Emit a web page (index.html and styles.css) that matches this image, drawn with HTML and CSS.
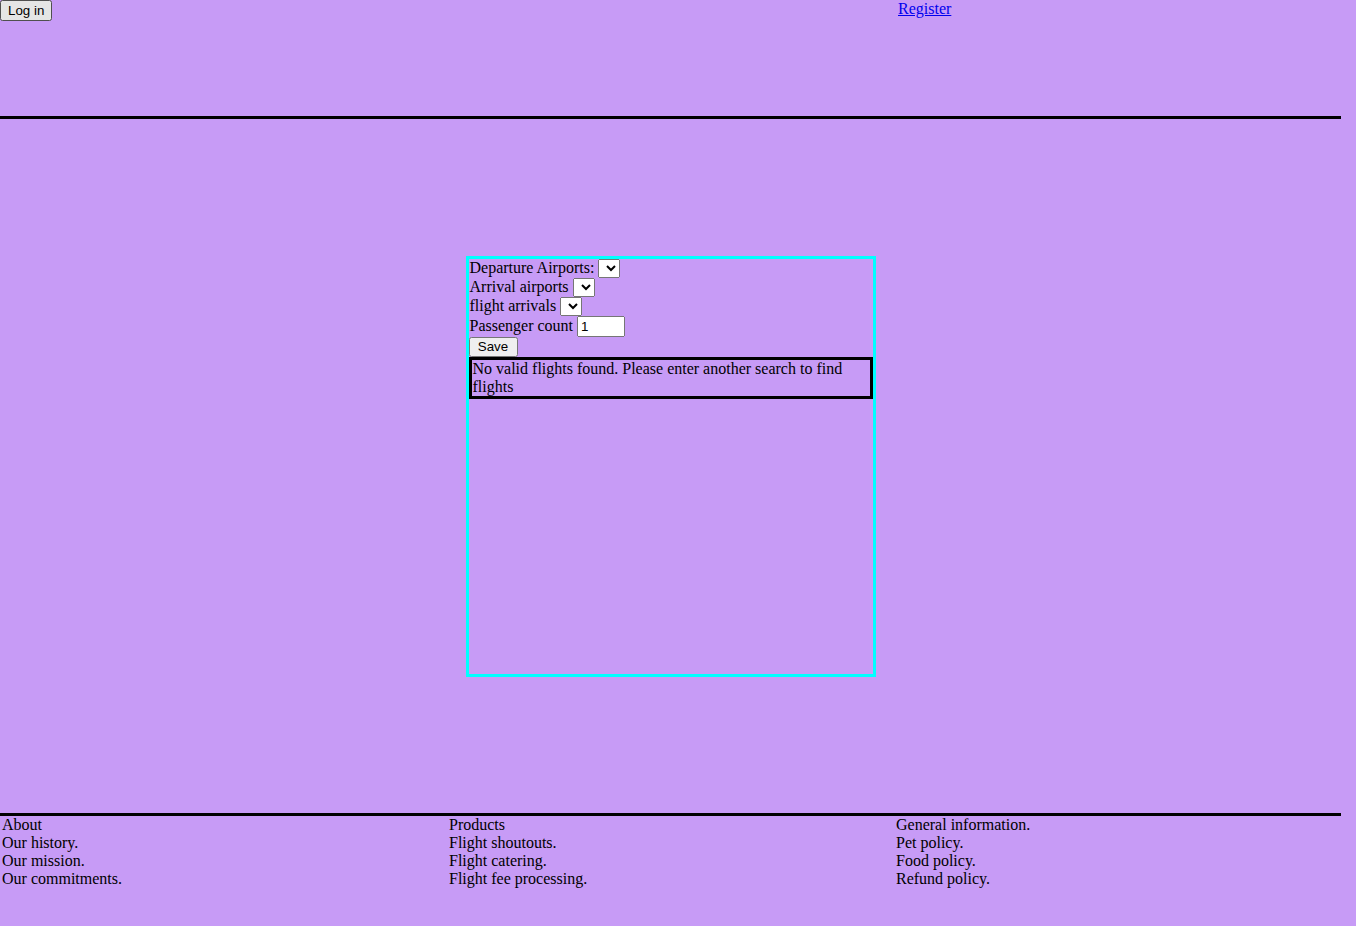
FILE: index.html
```html
<!DOCTYPE html>
<html>
<head>
<meta charset="utf-8">
<title>Flights</title>
<link rel="stylesheet" href="styles.css">
</head>
<body>
<header class="top">
  <div class="top-col"><button class="login">Log in</button></div>
  <div class="top-col"></div>
  <div class="top-col"><a href="#" class="register">Register</a></div>
</header>
<main class="main">
  <div class="search">
    <div class="row label-row">Departure Airports: <select class="sel"></select></div>
    <div class="row label-row">Arrival airports <select class="sel"></select></div>
    <div class="row label-row">flight arrivals <select class="sel"></select></div>
    <div class="row label-row">Passenger count <input class="count" type="text" value="1"></div>
    <div class="row"><button class="save">Save</button></div>
    <div class="msg">No valid flights found. Please enter another search to find flights</div>
  </div>
</main>
<footer class="foot">
  <div class="foot-col">
    <div>About</div>
    <div>Our history.</div>
    <div>Our mission.</div>
    <div>Our commitments.</div>
  </div>
  <div class="foot-col">
    <div>Products</div>
    <div>Flight shoutouts.</div>
    <div>Flight catering.</div>
    <div>Flight fee processing.</div>
  </div>
  <div class="foot-col">
    <div>General information.</div>
    <div>Pet policy.</div>
    <div>Food policy.</div>
    <div>Refund policy.</div>
  </div>
</footer>
</body>
</html>
```

FILE: styles.css
```css
html {
  background: #c79bf6;
  overflow-y: scroll;
}
body {
  margin: 0;
  width: 1341px;
  background: #c79bf6;
  font-family: "Liberation Serif", "Times New Roman", serif;
  font-size: 16px;
  color: #000;
}
.top {
  display: grid;
  grid-template-columns: repeat(3, 1fr);
  height: 116px;
  border-bottom: 3px solid #000;
}
.top-col {
  min-width: 0;
}
.login {
  font-family: "Liberation Sans", Arial, sans-serif;
  font-size: 13.333px;
  margin: 0;
  height: 21px;
  padding: 1px 6px;
}
.register {
  color: #0000ee;
  margin-left: 4px;
  line-height: 17px;
}
.main {
  height: 694px;
  display: flex;
  align-items: center;
  justify-content: center;
}
.search {
  width: 404px;
  height: 415px;
  border: 3px solid #00ffff;
  box-sizing: content-box;
}
.row {
  line-height: 18px;
  display: flex;
  align-items: center;
  gap: 4px;
}
.label-row {
  padding-left: 1px;
  line-height: 16px;
}
.sel {
  width: 22px;
  height: 19px;
  margin: 0;
}
.count {
  width: 48px;
  height: 21px;
  box-sizing: border-box;
  margin: 0;
  font-family: "Liberation Sans", Arial, sans-serif;
  font-size: 13.333px;
}
.save {
  font-family: "Liberation Sans", Arial, sans-serif;
  font-size: 13.333px;
  margin: 0;
  height: 20px;
  width: 49px;
  padding: 0;
}
.msg {
  border: 3px solid #000;
  padding: 0 1px;
  line-height: 18px;
}
.foot {
  display: grid;
  grid-template-columns: repeat(3, 1fr);
  border-top: 3px solid #000;
  height: 115px;
}
.foot-col {
  padding-left: 2px;
  line-height: 18px;
}
```
